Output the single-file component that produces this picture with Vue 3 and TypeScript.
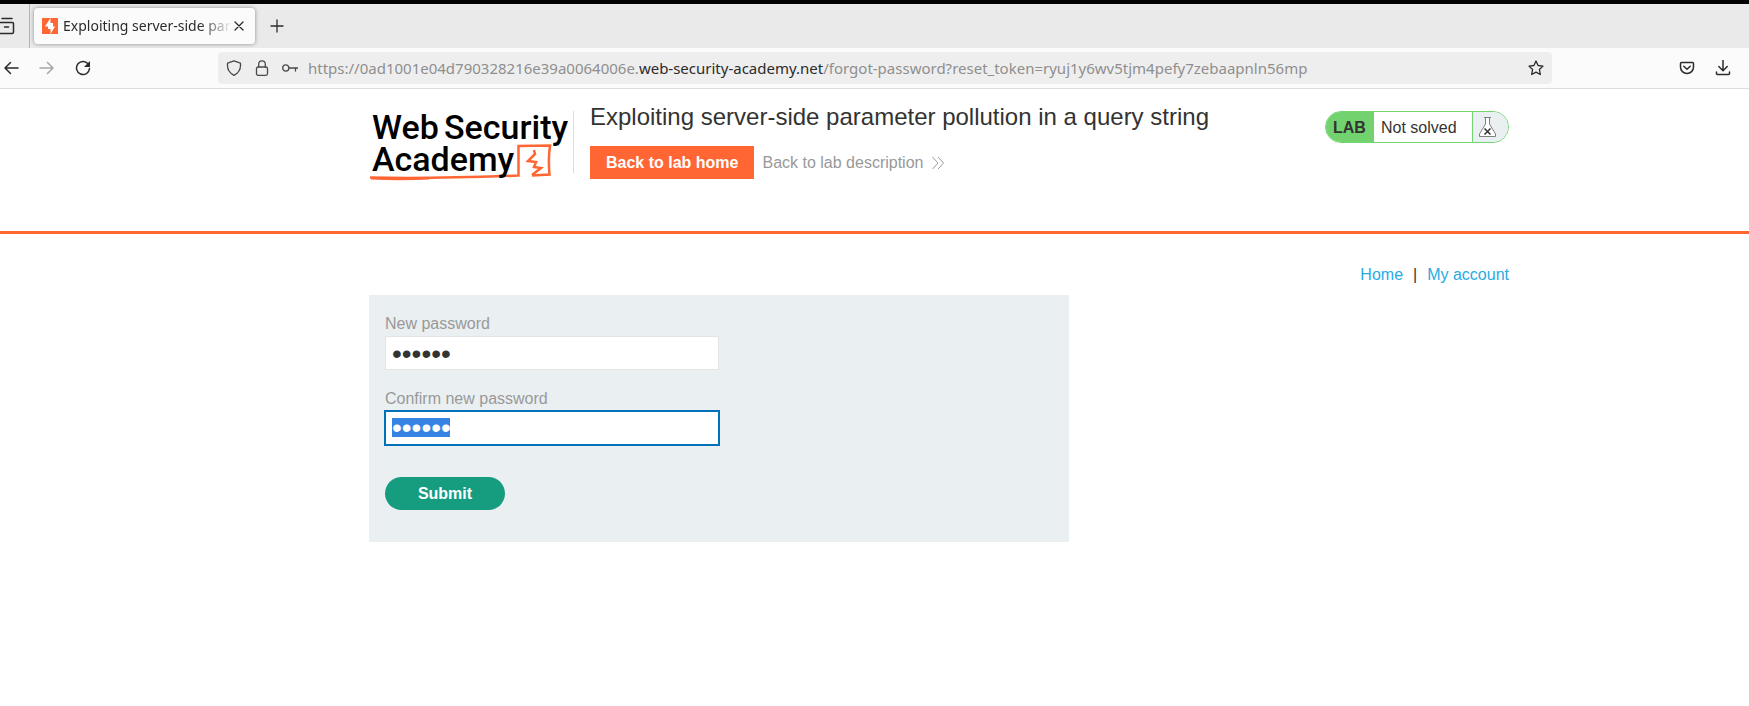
<script setup lang="ts">
import { ref } from 'vue'

const address = ref('https://0ad1001e04d790328216e39a0064006e.web-security-academy.net/forgot-password?reset_token=ryuj1y6wv5tjm4pefy7zebaapnln56mp')
const url = new URL(address.value)
const [subdomain, ...rest] = url.hostname.split('.')
const domain = rest.join('.')
const title = 'Exploiting server-side parameter pollution in a query string'
const password = ref('peter1')
const confirmation = ref('peter1')
</script>

<template>
  <div class="window">
    <div class="tabs">
      <button class="icon-btn view" aria-label="Firefox View">
        <svg width="18" height="18" viewBox="0 0 18 18"><path d="M4 1.500h10M1 6.500q0-1 1-1h12.500q1 0 1 1v8.500q0 1.500-1.500 1.500H2.500Q1 16.500 1 15zM6.500 10h4" /></svg>
      </button>
      <div class="tab">
        <svg class="favicon" width="16" height="16" viewBox="0 0 16 16"><path d="M0 0h16v16H0z" fill="#ff6633" /><path d="M8.500 0v5H11v3.500h2L8.500 16v-5H6V8.500H3z" fill="#fff" /></svg>
        <span class="tab-title">{{ title }}</span>
        <button class="icon-btn close" aria-label="Close tab">
          <svg width="10" height="10" viewBox="0 0 10 10"><path d="M1 1l8 8M9 1L1 9" /></svg>
        </button>
      </div>
      <button class="icon-btn plus" aria-label="New tab">
        <svg width="14" height="14" viewBox="0 0 14 14"><path d="M7 1v12M1 7h12" /></svg>
      </button>
    </div>

    <div class="toolbar">
      <div class="nav">
        <button class="icon-btn" aria-label="Back"><svg width="16" height="16" viewBox="0 0 16 16"><path d="M15 8H2M7.500 2.500L2 8l5.500 5.500" /></svg></button>
        <button class="icon-btn" aria-label="Forward" disabled><svg width="16" height="16" viewBox="0 0 16 16"><path d="M1 8h13M8.500 2.500L14 8l-5.500 5.500" /></svg></button>
        <button class="icon-btn" aria-label="Reload"><svg width="16" height="16" viewBox="0 0 16 16"><path d="M13.500 4.500A6.500 6.500 0 1 0 14.500 8.500" /><path d="M15 1v6H9z" fill="#2b2b2b" stroke="none" /></svg></button>
      </div>
      <div class="urlbar">
        <svg width="16" height="16" viewBox="0 0 16 16"><path d="M8 .800L14.400 3.200Q15.500 11.500 8 15.300Q.500 11.500 1.600 3.200z" /></svg>
        <svg width="16" height="16" viewBox="0 0 16 16"><rect x="2.500" y="7" width="11" height="8.300" rx="1.500" /><path d="M4.700 7V4.200a3.300 3.300 0 0 1 6.600 0V7" /></svg>
        <svg width="16" height="16" viewBox="0 0 16 16"><circle cx="3.800" cy="8" r="3.100" /><path d="M7 8h9M13.500 8v3" /></svg>
        <span class="address">{{ url.protocol }}//{{ subdomain }}.<b>{{ domain }}</b>{{ url.pathname }}{{ url.search }}</span>
        <button class="icon-btn" aria-label="Bookmark this page"><svg width="16" height="16" viewBox="0 0 16 16"><path d="M8 1l2.100 4.500 4.900.600-3.600 3.400.900 5L8 12.100 3.700 14.500l.900-5L1 6.100l4.900-.600z" /></svg></button>
      </div>
      <div class="actions">
        <button class="icon-btn" aria-label="Save to Pocket"><svg width="16" height="16" viewBox="0 0 16 16"><path d="M2.500 2.500h11q1 0 1 1V7a6.500 6.500 0 0 1-13 0V3.500q0-1 1-1zM4.800 6.300L8 9.300l3.200-3" /></svg></button>
        <button class="icon-btn" aria-label="Downloads"><svg width="16" height="16" viewBox="0 0 16 16"><path d="M8 .500v10M3.800 6.500L8 10.700l4.200-4.200M1.500 12v1.500q0 1 1 1h11q1 0 1-1V12" /></svg></button>
      </div>
    </div>

    <header class="lab-header">
      <a class="logo" href="#" aria-label="Web Security Academy">
        <svg width="200" height="76" viewBox="0 0 200 76">
          <path d="M1 70.500Q60 72 149.500 68.500V39L181 38.500Q179 52 180.500 67.500L163 68.500" fill="none" stroke="#ff6633" stroke-width="2.500" />
          <path d="M2 71.500Q30 73 60 71.500" fill="none" stroke="#ff6633" stroke-width="2" />
          <path d="M165 43l1 4-7 7 8 1-2 5 7 1-9 7" fill="none" stroke="#ff6633" stroke-width="2.500" />
          <text x="3" y="32">Web</text>
          <text x="75" y="32">Security</text>
          <text x="3" y="64">Academy</text>
        </svg>
      </a>
      <div class="heading">
        <h2>{{ title }}</h2>
        <div class="lab-links">
          <a class="lab-home" href="#">Back to lab home</a>
          <a class="lab-description" href="#">Back to lab description
            <svg width="12" height="12" viewBox="0 0 12 12"><path d="M.500 0l5.500 6-5.500 6M6 0l5.500 6L6 12" /></svg>
          </a>
        </div>
      </div>
      <div class="status">
        <strong>LAB</strong>
        <span>Not solved</span>
        <div class="flask">
          <svg width="17" height="20" viewBox="0 0 17 20"><path d="M5 .500h7M6.500 1v6L.500 17v2.500h16V17l-6-10V1" fill="#fff" stroke="#808080" /><path d="M5.500 11.500l6 6M11.500 11.500l-6 6" fill="none" stroke="#333" stroke-width="1.500" /></svg>
        </div>
      </div>
    </header>

    <main>
      <nav class="account-links"><a href="#">Home</a><span>|</span><a href="#">My account</a></nav>
      <form class="panel" @submit.prevent>
        <label for="new-password">New password</label>
        <input id="new-password" v-model="password" type="password" autocomplete="off">
        <label for="confirm-password">Confirm new password</label>
        <input id="confirm-password" v-model="confirmation" class="selected" type="password" autocomplete="off">
        <button type="submit">Submit</button>
      </form>
    </main>
  </div>
</template>

<style>
body { background: #fff; }
</style>

<style scoped>
* { box-sizing: border-box; }
.window { border-top: 4px solid #000; font: 16px/20px "Liberation Sans", Arial, sans-serif; color: #333332; }
a { text-decoration: none; }
svg { display: block; flex: none; }
.icon-btn { display: flex; flex: none; padding: 0; border: 0; background: none; }
.icon-btn svg, .urlbar > svg { fill: none; stroke: #2b2b2b; stroke-width: 1.5; stroke-linejoin: round; stroke-linecap: round; }
.icon-btn:disabled { opacity: 0.4; }
.tabs { display: flex; align-items: center; height: 44px; background: #eaeaea; overflow: hidden; }
.view { align-items: center; width: 30px; height: 44px; margin-right: 4px; border-right: 1px solid #b4b4b4; }
.view svg { margin-left: -2px; }
.tab { display: flex; align-items: center; width: 221px; height: 36px; padding: 0 11px 0 8px; border-radius: 4px; background: #fbfbfb; box-shadow: 0 0 4px rgba(0, 0, 0, 0.4); }
.tab-title { flex: 1; margin: 0 2px 0 5px; overflow: hidden; white-space: nowrap; font: 14px/20px "Noto Sans", sans-serif; color: #2b2b2b; -webkit-mask-image: linear-gradient(to left, transparent, #000 32px); mask-image: linear-gradient(to left, transparent, #000 32px); }
.close svg, .plus svg { stroke-width: 1.3; }
.plus { margin-left: 15px; }
.toolbar { display: flex; align-items: center; height: 41px; padding-right: 18px; border-bottom: 1px solid #dcdcdc; background: #fbfbfb; }
.nav { display: flex; gap: 20px; width: 218px; padding-left: 3px; }
.urlbar { display: flex; flex: 1; align-items: center; gap: 12px; height: 32px; padding: 0 8px; border-radius: 4px; background: #eeeeee; }
.urlbar > svg { stroke: #4a4a4a; stroke-width: 1.3; }
.urlbar .icon-btn svg { stroke-width: 1.3; }
.address { flex: 1; min-width: 0; margin-left: -2px; overflow: hidden; white-space: nowrap; font: 15px/24px "Noto Sans", sans-serif; color: #8f8f8f; }
.address b { font-weight: 400; color: #2b2b2b; }
.actions { display: flex; gap: 20px; margin-left: 127px; }
.lab-header { display: flex; align-items: flex-start; height: 145px; padding: 22px 240px 0 369px; border-bottom: 3px solid #ff6633; }
.logo { width: 205px; height: 62px; border-right: 1px solid #dedede; }
.logo svg { margin-top: -4px; overflow: visible; }
.logo text { font: 500 34px Roboto, sans-serif; fill: #000; }
.heading { flex: 1; padding-left: 16px; }
h2 { margin: -9px 0 14px; font-size: 24px; line-height: 30px; font-weight: 400; }
.lab-links { display: flex; align-items: center; gap: 8px; }
.lab-home { padding: 7px 16px 6px; background: #ff6633; color: #fff; font-weight: 700; }
.lab-description { display: flex; align-items: center; gap: 9px; color: #999; }
.lab-description svg { fill: none; stroke: #999; }
.status { display: flex; align-items: stretch; height: 32px; border: 1px solid #72d572; border-radius: 16px; overflow: hidden; line-height: 32px; }
.status strong { width: 48px; padding-left: 7px; background: #72d26e; }
.status span { width: 98px; padding-left: 7px; }
.flask { display: flex; align-items: center; width: 36px; padding-left: 6px; border-left: 1px solid #72d572; background: #eaeff2; }
main { padding: 31px 240px 0 369px; }
.account-links { display: flex; justify-content: flex-end; gap: 10px; margin-bottom: 10px; }
.account-links a { color: #29abe2; }
.panel { display: flex; flex-direction: column; align-items: flex-start; max-width: 700px; padding: 19px 16px 32px; background: #eaeff2; }
label { margin-bottom: 2px; color: #999; }
input { width: 334px; height: 34px; margin: 0 0 19px; padding: 2px 6px 0; border: 1px solid #e4e4e4; border-radius: 0; background: #fff; color: #333332; font: 28px/30px "Liberation Sans", Arial, sans-serif; outline: none; }
.selected { margin-bottom: 32px; padding-top: 0; outline: 2px solid #0072bc; outline-offset: -1px; color: #fff; background: linear-gradient(#3584e4, #3584e4) 6px 6px / 58px 19px no-repeat #fff; }
.panel button { min-width: 120px; height: 33px; border: 0; border-radius: 17px; background: #169c7f; color: #fff; font: 700 16px/20px "Liberation Sans", Arial, sans-serif; }
</style>
